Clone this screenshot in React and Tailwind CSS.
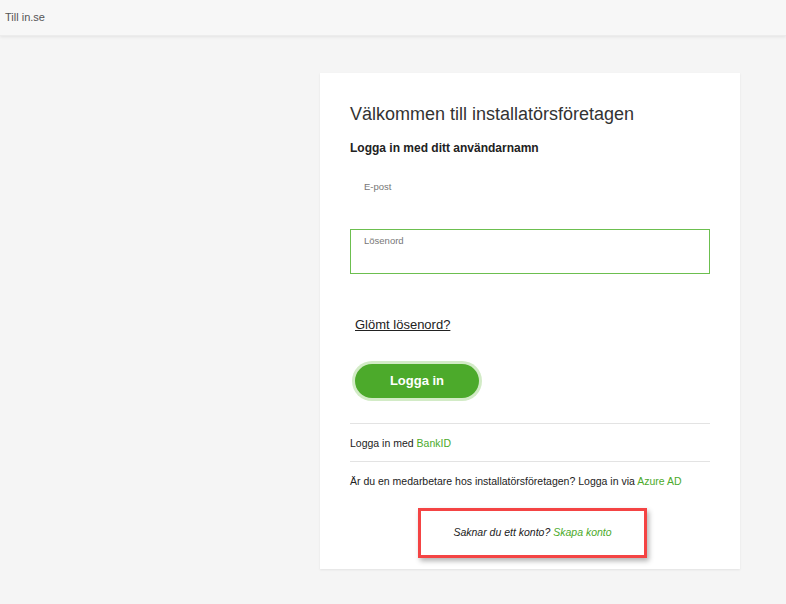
import React from "react";

export default function App() {
  return (
    <div className="min-h-[604px] bg-[#f5f5f5] font-['Liberation_Sans',Arial,sans-serif] text-[#222]">
      {/* Top bar */}
      <header className="h-[36px] bg-[#f7f7f7] shadow-[0_1px_3px_rgba(0,0,0,0.08)] border-b border-[#ececec] flex items-center px-[5px]">
        <a className="text-[11px] text-[#555]">Till in.se</a>
      </header>

      <div className="flex justify-start pl-[320px] pt-[37px]">
        <div className="w-[420px] bg-white shadow-[0_1px_2px_rgba(0,0,0,0.08)] px-[30px] pt-[30px] pb-[11px]">
          <h1 className="text-[18px] leading-[22px] text-[#333]">Välkommen till installatörsföretagen</h1>
          <h2 className="mt-[16px] text-[12px] leading-[14px] font-bold text-[#222]">Logga in med ditt användarnamn</h2>

          {/* Email */}
          <div className="mt-[17px] h-[47px] px-[14px] pt-[9px]">
            <label className="block text-[9.5px] leading-[11px] text-[#777]">E-post</label>
          </div>

          {/* Password */}
          <div className="mt-[10px] h-[45px] border border-[#6cbf4f] px-[13px] pt-[5px]">
            <label className="block text-[9.5px] leading-[11px] text-[#777]">Lösenord</label>
          </div>

          <div className="mt-[42px] pl-[5px] leading-[15px]">
            <a className="text-[13px] text-[#222] underline">Glömt lösenord?</a>
          </div>

          <div className="mt-[32px] pl-[5px] flex">
            <button className="w-[124px] h-[34px] rounded-full bg-[#4caa2b] ring-[3px] ring-[#d2ebc6] text-white font-bold text-[13px]">
              Logga in
            </button>
          </div>

          <div className="mt-[25px] border-t border-[#e3e3e3] pt-[13px] pb-[12px] text-[10.5px] leading-[12px]">
            Logga in med <a className="text-[#4caa2b]">BankID</a>
          </div>
          <div className="border-t border-[#e3e3e3] pt-[13px] text-[10.5px] leading-[12px]">
            Är du en medarbetare hos installatörsföretagen? Logga in via <a className="text-[#4caa2b]">Azure AD</a>
          </div>

          <div className="mt-[21px] flex justify-center">
            <div className="w-[229px] h-[50px] border-[3px] border-[#f44444] shadow-[2px_3px_5px_rgba(0,0,0,0.3)] flex items-center justify-center ml-[5px]">
              <p className="text-[10.5px] italic text-[#222]">
                Saknar du ett konto? <a className="text-[#4caa2b]">Skapa konto</a>
              </p>
            </div>
          </div>
        </div>
      </div>
    </div>
  );
}
